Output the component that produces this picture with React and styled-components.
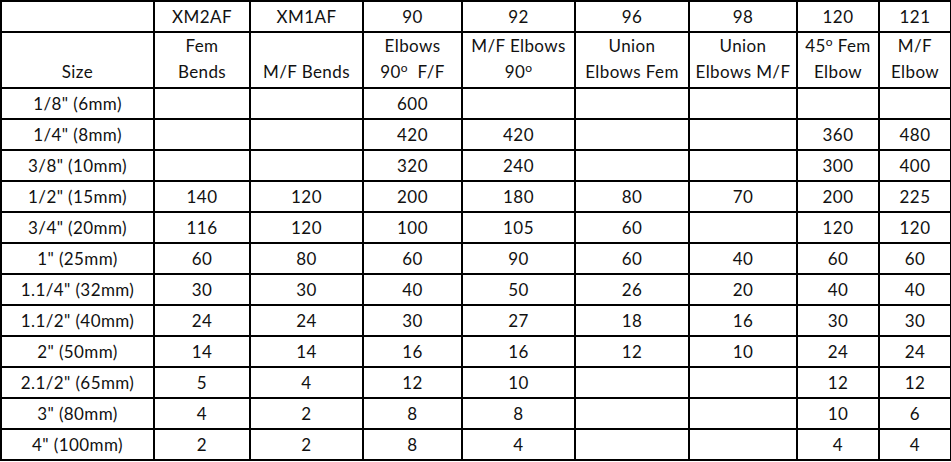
import React from 'react'
import styled, { createGlobalStyle } from 'styled-components'

const GlobalStyle = createGlobalStyle`
  html, body {
    margin: 0;
    padding: 0;
    background: #fff;
  }
`

const Table = styled.table`
  border-collapse: collapse;
  table-layout: fixed;
  width: 950px;
  font-family: Lato, "Liberation Sans", sans-serif;
  font-size: 17px;
  letter-spacing: 0.4px;
  color: #111;
`

const Cell = styled.td`
  border: 2px solid #000;
  padding: 0 1px;
  text-align: center;
  white-space: nowrap;
  overflow: hidden;
  height: ${p => p.$h}px;
  vertical-align: ${p => p.$valign || 'middle'};
  line-height: ${p => p.$lh || 20}px;
  padding-bottom: ${p => p.$pb || 0}px;
`

const Sup = styled.sup`
  font-size: 12px;
  vertical-align: 6px;
  line-height: 0;
`

const columns = [
  { code: 'XM2AF', name: ['Fem', 'Bends'], width: 96 },
  { code: 'XM1AF', name: ['', 'M/F Bends'], width: 113 },
  { code: '90', name: ['Elbows', <>90<Sup>o</Sup>&nbsp; F/F</>], width: 99 },
  { code: '92', name: ['M/F Elbows', <>90<Sup>o</Sup></>], width: 113 },
  { code: '96', name: ['Union', 'Elbows Fem'], width: 114 },
  { code: '98', name: ['Union', 'Elbows M/F'], width: 108 },
  { code: '120', name: [<>45<Sup>o</Sup> Fem</>, 'Elbow'], width: 82 },
  { code: '121', name: ['M/F', 'Elbow'], width: 72 },
]

const rows = [
  ['1/8" (6mm)', '', '', '600', '', '', '', '', ''],
  ['1/4" (8mm)', '', '', '420', '420', '', '', '360', '480'],
  ['3/8" (10mm)', '', '', '320', '240', '', '', '300', '400'],
  ['1/2" (15mm)', '140', '120', '200', '180', '80', '70', '200', '225'],
  ['3/4" (20mm)', '116', '120', '100', '105', '60', '', '120', '120'],
  ['1" (25mm)', '60', '80', '60', '90', '60', '40', '60', '60'],
  ['1.1/4" (32mm)', '30', '30', '40', '50', '26', '20', '40', '40'],
  ['1.1/2" (40mm)', '24', '24', '30', '27', '18', '16', '30', '30'],
  ['2" (50mm)', '14', '14', '16', '16', '12', '10', '24', '24'],
  ['2.1/2" (65mm)', '5', '4', '12', '10', '', '', '12', '12'],
  ['3" (80mm)', '4', '2', '8', '8', '', '', '10', '6'],
  ['4" (100mm)', '2', '2', '8', '4', '', '', '4', '4'],
]

export default function App() {
  return (
    <>
      <GlobalStyle />
      <Table>
        <colgroup>
          <col style={{ width: 153 }} />
          {columns.map(c => (
            <col key={c.code} style={{ width: c.width }} />
          ))}
        </colgroup>
        <thead>
          <tr>
            <Cell $h={29} />
            {columns.map(c => (
              <Cell key={c.code} $h={29}>{c.code}</Cell>
            ))}
          </tr>
          <tr>
            <Cell $h={52} $valign="bottom" $lh={26} $pb={2}>Size</Cell>
            {columns.map(c => (
              <Cell key={c.code} $h={52} $valign="bottom" $lh={26} $pb={2}>
                {c.name[0]}
                <br />
                {c.name[1]}
              </Cell>
            ))}
          </tr>
        </thead>
        <tbody>
          {rows.map(r => (
            <tr key={r[0]}>
              {r.map((v, i) => (
                <Cell key={i} $h={29}>{v}</Cell>
              ))}
            </tr>
          ))}
        </tbody>
      </Table>
    </>
  )
}
